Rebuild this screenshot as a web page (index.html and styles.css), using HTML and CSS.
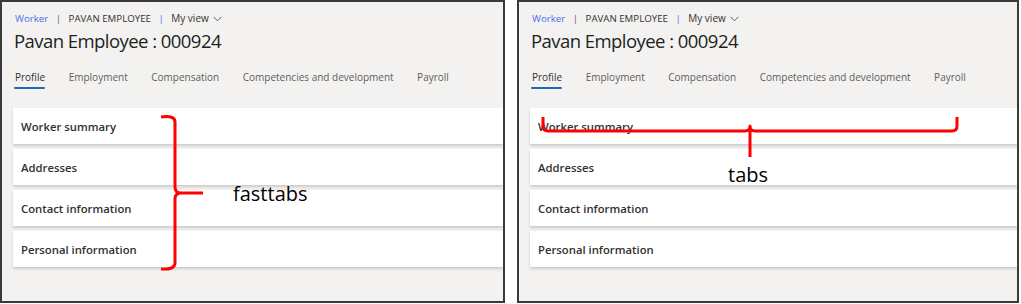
FILE: index.html
```html
<!DOCTYPE html>
<html lang="en">
<head>
<meta charset="utf-8">
<title>Fasttabs and tabs</title>
<link rel="stylesheet" href="styles.css">
</head>
<body>
<div class="stage">
  <section class="panel">
    <div class="crumbs">
      <a class="crumb-link">Worker</a><span class="sep">|</span><span class="crumb">PAVAN EMPLOYEE</span><span class="sep sep-blue">|</span><span class="view">My view <svg class="chev" width="9" height="6" viewBox="0 0 9 6"><path d="M0.5 0.8 L4.5 4.8 L8.5 0.8" fill="none" stroke="#605e5c" stroke-width="1"/></svg></span>
    </div>
    <h1 class="title">Pavan Employee : 000924</h1>
    <nav class="tabs">
      <span class="tab active">Profile</span>
      <span class="tab">Employment</span>
      <span class="tab">Compensation</span>
      <span class="tab">Competencies and development</span>
      <span class="tab">Payroll</span>
    </nav>
    <div class="cards">
      <div class="card">Worker summary</div>
      <div class="card">Addresses</div>
      <div class="card">Contact information</div>
      <div class="card">Personal information</div>
    </div>
    <svg class="note-mark" width="505" height="304" viewBox="0 0 505 304">
      <path d="M161 117 Q175 115 175 122 L175 187 Q175 193 181 193 L203 193 M181 193 Q175 193 175 199 L175 263 Q175 270 161 269" fill="none" stroke="#ff0000" stroke-width="3" stroke-linejoin="round"/>
    </svg>
    <span class="note note-fast">fasttabs</span>
  </section>
  <section class="panel">
    <div class="crumbs">
      <a class="crumb-link">Worker</a><span class="sep">|</span><span class="crumb">PAVAN EMPLOYEE</span><span class="sep sep-blue">|</span><span class="view">My view <svg class="chev" width="9" height="6" viewBox="0 0 9 6"><path d="M0.5 0.8 L4.5 4.8 L8.5 0.8" fill="none" stroke="#605e5c" stroke-width="1"/></svg></span>
    </div>
    <h1 class="title">Pavan Employee : 000924</h1>
    <nav class="tabs">
      <span class="tab active">Profile</span>
      <span class="tab">Employment</span>
      <span class="tab">Compensation</span>
      <span class="tab">Competencies and development</span>
      <span class="tab">Payroll</span>
    </nav>
    <div class="cards">
      <div class="card">Worker summary</div>
      <div class="card">Addresses</div>
      <div class="card">Contact information</div>
      <div class="card">Personal information</div>
    </div>
    <svg class="note-mark" width="502" height="304" viewBox="517 0 502 304">
      <path d="M543 117 L543 126 Q543 131 548 131 L745 131 Q750 131 750 126 Q750 131 755 131 L952 131 Q957 131 957 126 L957 117 M750 131 L750 157" fill="none" stroke="#ff0000" stroke-width="3" stroke-linejoin="round"/>
    </svg>
    <span class="note note-tabs">tabs</span>
  </section>
</div>
</body>
</html>
```

FILE: styles.css
```css
* { box-sizing: border-box; }
html, body { margin: 0; padding: 0; background: #ffffff; }
body { width: 1021px; height: 304px; overflow: hidden; font-family: "Open Sans", "Noto Sans", sans-serif; }

.stage {
  display: flex;
  gap: 12px;
  align-items: flex-start;
}

.panel {
  position: relative;
  width: 505px;
  height: 303px;
  background: #f3f2f1;
  border: 2px solid #3a3a3a;
  padding: 8px 0 0 11px;
  overflow: hidden;
}
.panel + .panel { width: 502px; }

.crumbs {
  display: flex;
  align-items: center;
  height: 16px;
  font-size: 9.7px;
  color: #323130;
  padding-left: 2px;
}
.crumb-link { color: #4f6bed; }
.sep { color: #605e5c; margin: 0 7.5px; }
.sep-blue { color: #4f6bed; }
.view { display: inline-flex; align-items: center; gap: 4px; color: #323130; font-size: 10px; }
.chev { margin-top: 1px; }

.title {
  margin: 3px 0 0 1px;
  font-size: 18.5px;
  font-weight: 500;
  line-height: 24px;
  color: #201f1e;
  letter-spacing: -0.55px;
}

.tabs {
  display: flex;
  gap: 23.5px;
  margin-top: 16px;
  padding-left: 2px;
  height: 21px;
}
.tab {
  font-size: 10px;
  color: #605e5c;
  line-height: 16px;
  height: 21px;
  position: relative;
}
.tab.active { color: #323130; }
.tab.active::after {
  content: "";
  position: absolute;
  left: -1px;
  right: 0;
  bottom: 1px;
  height: 2px;
  background: #1f6ab5;
  border-radius: 1px;
}

.cards {
  display: flex;
  flex-direction: column;
  gap: 5px;
  margin-top: 18px;
}
.card {
  height: 36px;
  background: #ffffff;
  display: flex;
  align-items: center;
  padding-left: 8px;
  font-size: 11.3px;
  font-weight: 600;
  color: #323130;
  box-shadow: 0 1.5px 2.5px rgba(0,0,0,0.16), 0 0.3px 0.9px rgba(0,0,0,0.10);
}

.note-mark {
  position: absolute;
  left: -2px;
  top: -2px;
  pointer-events: none;
}
.note {
  position: absolute;
  font-family: "Open Sans", "Noto Sans", sans-serif;
  font-size: 20px;
  color: #000000;
  line-height: 24px;
}
.note-fast { left: 231px; top: 180px; }
.note-tabs { left: 209px; top: 161px; }
```
